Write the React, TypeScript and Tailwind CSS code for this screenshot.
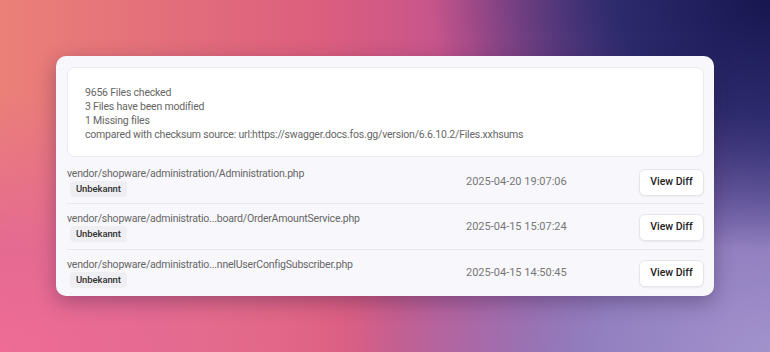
import React from "react";

const rows = [
  { file: "vendor/shopware/administration/Administration.php", date: "2025-04-20 19:07:06" },
  { file: "vendor/shopware/administratio...board/OrderAmountService.php", date: "2025-04-15 15:07:24" },
  { file: "vendor/shopware/administratio...nnelUserConfigSubscriber.php", date: "2025-04-15 14:50:45" },
];

export default function App() {
  return (
    <div
      className="w-[770px] h-[352px] flex items-center justify-center bg-[radial-gradient(ellipse_340px_250px_at_100%_0%,#171650_0%,#2c2a6c_45%,transparent_100%),radial-gradient(ellipse_420px_260px_at_100%_100%,#a292cc_0%,#9280c0_40%,transparent_100%),radial-gradient(ellipse_400px_260px_at_0%_100%,#ee6c96_0%,#e56a92_40%,transparent_100%),linear-gradient(to_right,#eb8078_0%,#dc5e7e_42%,#c05290_62%,#84509e_82%,#5c4c9c_100%)]"
      style={{ fontFamily: "Roboto, 'Noto Sans', sans-serif" }}
    >
      <div className="w-[658px] h-[240px] rounded-[10px] bg-[#f8f7fb] shadow-[0_6px_20px_rgba(40,20,60,0.35)] pl-[11px] pr-[10px] pt-[11px] flex flex-col">
        <div className="shrink-0 h-[90px] rounded-[8px] bg-white border border-[#ebeaf0] pl-[17px] pt-[18px] text-[10.5px] tracking-[-0.2px] leading-[14px] text-[#666666]">
          <div>9656 Files checked</div>
          <div>3 Files have been modified</div>
          <div>1 Missing files</div>
          <div>compared with checksum source: url:https://swagger.docs.fos.gg/version/6.6.10.2/Files.xxhsums</div>
        </div>
        <div className="flex flex-col">
          {rows.map((r, i) => (
            <div
              key={i}
              className={
                "flex items-center " + (i > 0 ? "border-t border-[#e9e8ee] pt-[8px] pb-[7px]" : "pt-[10px] pb-[6px]")
              }
            >
              <div className="flex-1 flex flex-col items-start">
                <div className="text-[10.5px] tracking-[-0.2px] leading-[14px] text-[#666666]">{r.file}</div>
                <div className="ml-[3px] h-[16px] px-[6px] rounded-[4px] bg-[#efeef2] text-[9.5px] tracking-[-0.1px] leading-[16px] font-medium text-[#333333]">
                  Unbekannt
                </div>
              </div>
              <div className="w-[173px] text-[11px] leading-[14px] text-[#777777]">{r.date}</div>
              <button className="w-[65px] h-[27px] rounded-[6px] bg-white border border-[#e6e5eb] shadow-[0_1px_2px_rgba(0,0,0,0.06)] text-[10.5px] font-medium text-[#222222]">
                View Diff
              </button>
            </div>
          ))}
        </div>
      </div>
    </div>
  );
}
